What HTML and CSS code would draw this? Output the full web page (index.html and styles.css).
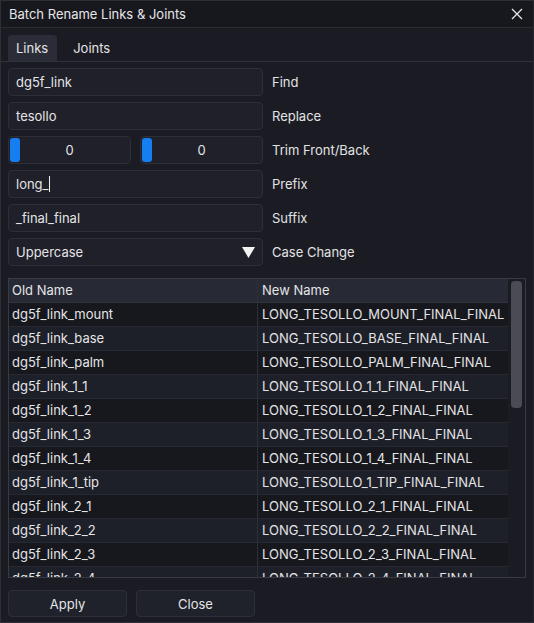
FILE: index.html
```html
<!DOCTYPE html>
<html>
<head>
<meta charset="utf-8">
<link rel="stylesheet" href="styles.css">
</head>
<body>
<div class="window">
  <div class="titlebar">
    <span class="title">Batch Rename Links &amp; Joints</span>
    <svg class="close" width="12" height="12" viewBox="0 0 12 12"><path d="M1 1L11 11M11 1L1 11" stroke="#e8e8ea" stroke-width="1.3" fill="none"/></svg>
  </div>
  <div class="tabs">
    <div class="tab active">Links</div>
    <div class="tab">Joints</div>
  </div>
  <div class="content">
    <div class="row">
      <div class="field"><span>dg5f_link</span></div>
      <span class="label">Find</span>
    </div>
    <div class="row">
      <div class="field"><span>tesollo</span></div>
      <span class="label">Replace</span>
    </div>
    <div class="row">
      <div class="pair">
        <div class="slider"><span class="grab"></span><span class="val">0</span></div>
        <div class="slider"><span class="grab"></span><span class="val">0</span></div>
      </div>
      <span class="label">Trim Front/Back</span>
    </div>
    <div class="row">
      <div class="field"><span>long_</span><span class="caret"></span></div>
      <span class="label">Prefix</span>
    </div>
    <div class="row">
      <div class="field"><span>_final_final</span></div>
      <span class="label">Suffix</span>
    </div>
    <div class="row">
      <div class="field combo"><span>Uppercase</span>
        <svg width="13" height="11" viewBox="0 0 13 11"><path d="M0 0H13L6.5 11Z" fill="#f2f2f2"/></svg>
      </div>
      <span class="label">Case Change</span>
    </div>

    <div class="table">
      <div class="tbody">
        <div class="tr head"><div class="td c1">Old Name</div><div class="td c2">New Name</div></div>
        <div class="tr"><div class="td c1">dg5f_link_mount</div><div class="td c2">LONG_TESOLLO_MOUNT_FINAL_FINAL</div></div>
        <div class="tr"><div class="td c1">dg5f_link_base</div><div class="td c2">LONG_TESOLLO_BASE_FINAL_FINAL</div></div>
        <div class="tr"><div class="td c1">dg5f_link_palm</div><div class="td c2">LONG_TESOLLO_PALM_FINAL_FINAL</div></div>
        <div class="tr"><div class="td c1">dg5f_link_1_1</div><div class="td c2">LONG_TESOLLO_1_1_FINAL_FINAL</div></div>
        <div class="tr"><div class="td c1">dg5f_link_1_2</div><div class="td c2">LONG_TESOLLO_1_2_FINAL_FINAL</div></div>
        <div class="tr"><div class="td c1">dg5f_link_1_3</div><div class="td c2">LONG_TESOLLO_1_3_FINAL_FINAL</div></div>
        <div class="tr"><div class="td c1">dg5f_link_1_4</div><div class="td c2">LONG_TESOLLO_1_4_FINAL_FINAL</div></div>
        <div class="tr"><div class="td c1">dg5f_link_1_tip</div><div class="td c2">LONG_TESOLLO_1_TIP_FINAL_FINAL</div></div>
        <div class="tr"><div class="td c1">dg5f_link_2_1</div><div class="td c2">LONG_TESOLLO_2_1_FINAL_FINAL</div></div>
        <div class="tr"><div class="td c1">dg5f_link_2_2</div><div class="td c2">LONG_TESOLLO_2_2_FINAL_FINAL</div></div>
        <div class="tr"><div class="td c1">dg5f_link_2_3</div><div class="td c2">LONG_TESOLLO_2_3_FINAL_FINAL</div></div>
        <div class="tr"><div class="td c1">dg5f_link_2_4</div><div class="td c2">LONG_TESOLLO_2_4_FINAL_FINAL</div></div>
      </div>
      <div class="scroll"><div class="thumb"></div></div>
    </div>

    <div class="buttons">
      <div class="btn">Apply</div>
      <div class="btn">Close</div>
    </div>
  </div>
</div>
</body>
</html>
```

FILE: styles.css
```css
html, body {
  margin: 0;
  padding: 0;
  background: #1b1c23;
}
body {
  font-family: Inter, "Noto Sans", sans-serif;
  font-size: 13px;
  color: #e4e4e6;
}
.window {
  width: 534px;
  height: 623px;
  box-sizing: border-box;
  border: 1px solid #2d2e36;
  border-right-color: #24252c;
  background: #1b1c23;
  display: flex;
  flex-direction: column;
  overflow: hidden;
}
.titlebar {
  height: 26px;
  flex: none;
  border-bottom: 1px solid #2a2b33;
  background: #17181e;
  display: flex;
  align-items: center;
  justify-content: space-between;
  padding: 0 10px 0 8px;
}
.title {
  color: #e6e6e8;
}
.close {
  display: block;
}
.tabs {
  flex: none;
  margin-top: 7px;
  padding-left: 7px;
  height: 26px;
  display: flex;
  border-bottom: 1px solid #2f313b;
}
.tab {
  height: 26px;
  padding: 0 16px 0 8px;
  display: flex;
  align-items: center;
  border-radius: 4px 4px 0 0;
  color: #e4e4e6;
}
.tab.active {
  background: #2a2d38;
  padding: 0 9px 0 8px;
  margin-right: 8px;
}
.content {
  padding: 6px 7px 0 7px;
  display: flex;
  flex-direction: column;
}
.row {
  height: 28px;
  margin-bottom: 6px;
  display: flex;
  align-items: center;
}
.field, .pair {
  width: 255px;
  height: 28px;
  box-sizing: border-box;
  flex: none;
}
.field {
  background: #1f2029;
  border: 1px solid #2c2e38;
  border-radius: 4px;
  display: flex;
  align-items: center;
  padding-left: 7px;
}
.caret {
  width: 1px;
  height: 16px;
  background: #f0f0f0;
}
.combo {
  justify-content: space-between;
  padding-right: 7px;
}
.combo svg {
  display: block;
}
.pair {
  display: flex;
  gap: 9px;
}
.slider {
  flex: 1;
  height: 28px;
  box-sizing: border-box;
  background: #1f2029;
  border: 1px solid #2c2e38;
  border-radius: 4px;
  position: relative;
  display: flex;
  align-items: center;
  justify-content: center;
}
.grab {
  position: absolute;
  left: 1px;
  top: 1px;
  width: 10px;
  height: 24px;
  border-radius: 3px;
  background: #157ef0;
}
.label {
  margin-left: 9px;
  color: #e2e2e4;
}
.table {
  margin-top: 6px;
  height: 300px;
  box-sizing: border-box;
  border: 1px solid #383a44;
  display: flex;
  overflow: hidden;
}
.tbody {
  flex: 1;
  overflow: hidden;
}
.tr {
  height: 24px;
  display: flex;
  box-sizing: border-box;
  border-bottom: 1px solid #262832;
  background: #17181e;
}
.tr:nth-child(odd) {
  background: #1e2029;
}
.tr.head {
  background: #272a35;
  border-bottom-color: #30323c;
}
.td {
  display: flex;
  align-items: center;
  padding-left: 3px;
  padding-bottom: 1px;
  white-space: nowrap;
  overflow: hidden;
}
.c1 {
  width: 245px;
  border-right: 1px solid #2e3039;
}
.c2 {
  flex: 1;
  padding-left: 4px;
}
.scroll {
  width: 17px;
  flex: none;
  background: #1b1c23;
  padding: 2px 3px;
  box-sizing: border-box;
}
.thumb {
  height: 127px;
  border-radius: 4px;
  background: #4b4c53;
}
.buttons {
  margin-top: 12px;
  display: flex;
  gap: 9px;
}
.btn {
  width: 119px;
  height: 27px;
  box-sizing: border-box;
  background: #20222b;
  border: 1px solid #2c2e38;
  border-radius: 4px;
  display: flex;
  align-items: center;
  justify-content: center;
  color: #e4e4e6;
}
```
